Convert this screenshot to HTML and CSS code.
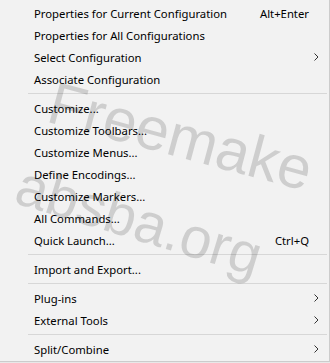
FILE: index.html
```html
<!DOCTYPE html>
<html lang="en">
  <head>
    <meta charset="UTF-8" />
    <title>Tools Menu</title>
    <link rel="stylesheet" href="styles.css">
  </head>
  <body>
    <div class="menu">
      <div class="item"><span class="label">Properties for Current Configuration</span><span class="shortcut">Alt+Enter</span><span class="arrow"></span></div>
      <div class="item"><span class="label">Properties for All Configurations</span><span class="shortcut"></span><span class="arrow"></span></div>
      <div class="item"><span class="label">Select Configuration</span><span class="shortcut"></span><span class="arrow"><svg width="5" height="8" viewBox="0 0 5 8"><path d="M0.5 0.5 L4 4 L0.5 7.5" /></svg></span></div>
      <div class="item"><span class="label">Associate Configuration</span><span class="shortcut"></span><span class="arrow"></span></div>

      <div class="separator"></div>

      <div class="item"><span class="label">Customize...</span><span class="shortcut"></span><span class="arrow"></span></div>
      <div class="item"><span class="label">Customize Toolbars...</span><span class="shortcut"></span><span class="arrow"></span></div>
      <div class="item"><span class="label">Customize Menus...</span><span class="shortcut"></span><span class="arrow"></span></div>
      <div class="item"><span class="label">Define Encodings...</span><span class="shortcut"></span><span class="arrow"></span></div>
      <div class="item"><span class="label">Customize Markers...</span><span class="shortcut"></span><span class="arrow"></span></div>
      <div class="item"><span class="label">All Commands...</span><span class="shortcut"></span><span class="arrow"></span></div>
      <div class="item"><span class="label">Quick Launch...</span><span class="shortcut">Ctrl+Q</span><span class="arrow"></span></div>

      <div class="separator"></div>

      <div class="item"><span class="label">Import and Export...</span><span class="shortcut"></span><span class="arrow"></span></div>

      <div class="separator"></div>

      <div class="item"><span class="label">Plug-ins</span><span class="shortcut"></span><span class="arrow"><svg width="5" height="8" viewBox="0 0 5 8"><path d="M0.5 0.5 L4 4 L0.5 7.5" /></svg></span></div>
      <div class="item"><span class="label">External Tools</span><span class="shortcut"></span><span class="arrow"><svg width="5" height="8" viewBox="0 0 5 8"><path d="M0.5 0.5 L4 4 L0.5 7.5" /></svg></span></div>

      <div class="separator"></div>

      <div class="item"><span class="label">Split/Combine</span><span class="shortcut"></span><span class="arrow"><svg width="5" height="8" viewBox="0 0 5 8"><path d="M0.5 0.5 L4 4 L0.5 7.5" /></svg></span></div>

      <!-- watermark lines lie over the menu -->
      <span class="watermark watermark-top">Freemake</span>
      <span class="watermark watermark-bottom">absba.org</span>
    </div>
  </body>
</html>
```

FILE: styles.css
```css
:root {
  --menu-bg: #f2f2f2;
  --text-color: #000;
  --separator-color: #d7d7d7;
  --border-color: #cccccc;
  --font-family: "Segoe UI", "Noto Sans", "Open Sans", sans-serif;
}

* {
  margin: 0;
  padding: 0;
  box-sizing: border-box;
}

body {
  width: 330px;
  height: 363px;
  overflow: hidden;
  background-color: #e8e8e8;
  font-family: var(--font-family);
  font-size: 11.3px;
  color: var(--text-color);
}

.menu {
  position: relative;
  width: 330px;
  height: 362px;
  padding-top: 2px;
  background-color: var(--menu-bg);
  border-right: 1px solid var(--border-color);
  border-bottom: 1px solid var(--border-color);
  overflow: hidden;
}

.item {
  display: grid;
  grid-template-columns: 1fr auto 20px;
  align-items: center;
  height: 22px;
  padding-left: 34px;
  white-space: nowrap;
}

.shortcut {
  text-align: right;
}

.arrow {
  display: flex;
  align-items: center;
  padding-left: 5px;
}

.arrow svg {
  fill: none;
  stroke: #333;
  stroke-width: 1;
}

.separator {
  height: 7px;
  margin-left: 28px;
  margin-right: 2px;
  display: flex;
  align-items: center;
}

.separator::after {
  content: "";
  flex: 1;
  height: 1px;
  background-color: var(--separator-color);
}

.watermark {
  position: absolute;
  font-family: "Liberation Sans", Arial, sans-serif;
  white-space: nowrap;
  color: rgba(0, 0, 0, 0.15);
  transform-origin: left center;
  pointer-events: none;
}

.watermark-top {
  left: 50px;
  top: 72px;
  font-size: 60px;
  line-height: 60px;
  transform: rotate(15deg);
}

.watermark-bottom {
  left: 18px;
  top: 155px;
  font-size: 57px;
  line-height: 57px;
  transform: rotate(17deg);
}
```
